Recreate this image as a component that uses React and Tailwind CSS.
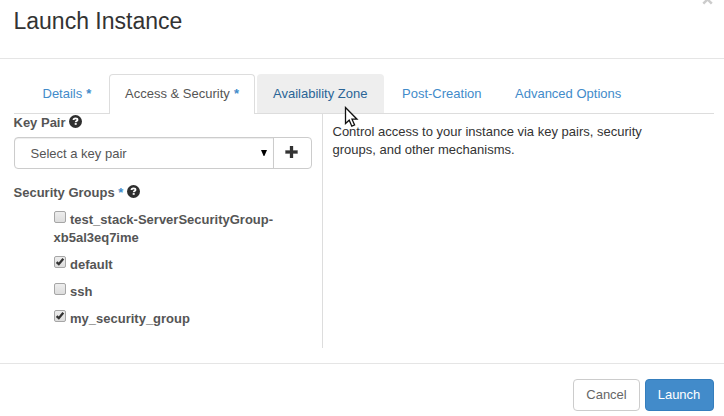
import React from 'react';

function Help() {
  return (
    <svg className="inline-block w-[13px] h-[13px] align-[-1px]" viewBox="0 0 13 13">
      <circle cx="6.5" cy="6.5" r="6.5" fill="#2e2e2e" />
      <path d="M4.5 5C4.5 3.8 5.3 3.4 6.5 3.4s2 .6 2 1.5c0 1.2-1.8 1.2-1.8 2.3" fill="none" stroke="#fff" strokeWidth="1.8" />
      <rect x="5.7" y="8.1" width="2" height="1.7" fill="#fff" />
    </svg>
  );
}

function Checkbox({ checked }) {
  return (
    <svg className="inline-block w-[12px] h-[12px] mr-[4.5px] align-[1px]" viewBox="0 0 12 12">
      <defs>
        <linearGradient id="boxFill" x1="0" y1="0" x2="0" y2="1">
          <stop offset="0" stopColor="#eeeeee" />
          <stop offset="1" stopColor="#dcdcdc" />
        </linearGradient>
      </defs>
      <rect x="0.5" y="0.5" width="11" height="11" rx="1.5" fill="url(#boxFill)" stroke="#a6a6a6" />
      {checked && <path d="M2.6 6.2L4.8 8.2L9.3 2.7" fill="none" stroke="#333" strokeWidth="2.3" />}
    </svg>
  );
}

const groups = [
  { name: 'test_stack-ServerSecurityGroup-xb5al3eq7ime', checked: false },
  { name: 'default', checked: true },
  { name: 'ssh', checked: false },
  { name: 'my_security_group', checked: true },
];

export default function App() {
  return (
    <div className="relative w-[724px] h-[416px] overflow-hidden bg-white text-[#333] text-[13px] leading-[18px] font-['Liberation_Sans',Arial,sans-serif]">
      <header className="h-[59px] border-b border-[#e5e5e5] pl-[13.5px] pt-[5px]">
        <h4 className="text-[23px] leading-[32px]">Launch Instance</h4>
        <svg className="absolute left-[702px] top-[-6px] w-[11px] h-[11px]" viewBox="0 0 11 11">
          <path d="M1.3 1L9.8 9.7M9.8 1L1.3 9.7" stroke="#ccc" strokeWidth="2.5" />
        </svg>
      </header>

      <nav className="mt-[15px] ml-[14px] w-[700px] h-[40px] pl-[12px] flex gap-[2px] border-b border-[#ddd] text-[#428bca] leading-[18px]">
        <a className="w-[81px] h-[39px] pt-[11px] pl-[16.5px] whitespace-nowrap">Details <b className="ml-[0.5px]">*</b></a>
        <a className="w-[146px] h-[40px] pt-[10px] pl-[15px] border border-b-0 border-[#ddd] rounded-t-[4px] bg-white text-[#555] whitespace-nowrap">
          Access &amp; Security <b className="ml-[0.5px] text-[#428bca]">*</b>
        </a>
        <a className="w-[127px] h-[39px] pt-[11px] pl-[16px] bg-[#eee] rounded-t-[4px] text-[#2a6496] whitespace-nowrap">Availability Zone</a>
        <a className="w-[111px] h-[39px] pt-[11px] pl-[16px] whitespace-nowrap">Post-Creation</a>
        <a className="h-[39px] pt-[11px] pl-[16px] whitespace-nowrap">Advanced Options</a>
      </nav>

      <main className="flex h-[234px] ml-[14px]">
        <section className="w-[309px] border-r border-[#ddd]">
          <label className="block h-[23px] leading-[18px] font-bold text-[#555] -ml-[0.5px] whitespace-nowrap">Key Pair <Help /></label>
          <div className="flex w-[298px] h-[32px] border border-[#ccc] rounded-[4px]">
            <div className="flex items-center justify-between w-[259px] pl-[15.5px] pr-[6px] border-r border-[#ccc] text-[#555] shadow-[inset_0_1px_1px_rgba(0,0,0,0.075)] rounded-l-[3px]">
              <span className="pt-px">Select a key pair</span>
              <svg className="w-[6px] h-[6px]" viewBox="0 0 6 6"><path d="M0 0H6L3.4 6H2.6Z" fill="#000" /></svg>
            </div>
            <div className="flex flex-1 items-center justify-center pr-[2px] pb-[2px]">
              <svg className="w-[13px] h-[12px]" viewBox="0 0 13 12"><path d="M5 0h3v4.5h4.5v3H8V12H5V7.5H0.5v-3H5z" fill="#333" stroke="#333" strokeWidth="0.3" /></svg>
            </div>
          </div>
          <label className="block mt-[15px] leading-[18px] font-bold text-[#555] -ml-[0.5px] whitespace-nowrap">
            Security Groups <span className="text-[#428bca]">*</span> <Help />
          </label>
          <ul className="mt-[9px] ml-[39.5px] w-[235px] flex flex-col gap-[9px] font-bold text-[#555]">
            {groups.map((g) => (
              <li key={g.name}><Checkbox checked={g.checked} />{g.name}</li>
            ))}
          </ul>
        </section>
        <section className="pl-[9.5px] pt-[9px] w-[345px]">
          <p>Control access to your instance via key pairs, security groups, and other mechanisms.</p>
        </section>
      </main>

      <footer className="mt-[15px] pt-[15px] pr-[10px] border-t border-[#e5e5e5] flex justify-end gap-[5px]">
        <button className="w-[67px] h-[32px] rounded-[4px] border border-[#ccc] bg-white text-[#666]">Cancel</button>
        <button className="w-[69px] h-[32px] rounded-[4px] border border-[#357ebd] bg-[#428bca] text-white pr-px">Launch</button>
      </footer>

      <svg className="absolute left-[344px] top-[106px] w-[15px] h-[22px]" viewBox="0 0 15 22">
        <path d="M1.5 1.5V17.5L5.2 14.2L7.8 20.2L10.6 19L8 13.2H13Z" fill="#fff" stroke="#111" strokeWidth="1.3" />
      </svg>
    </div>
  );
}
